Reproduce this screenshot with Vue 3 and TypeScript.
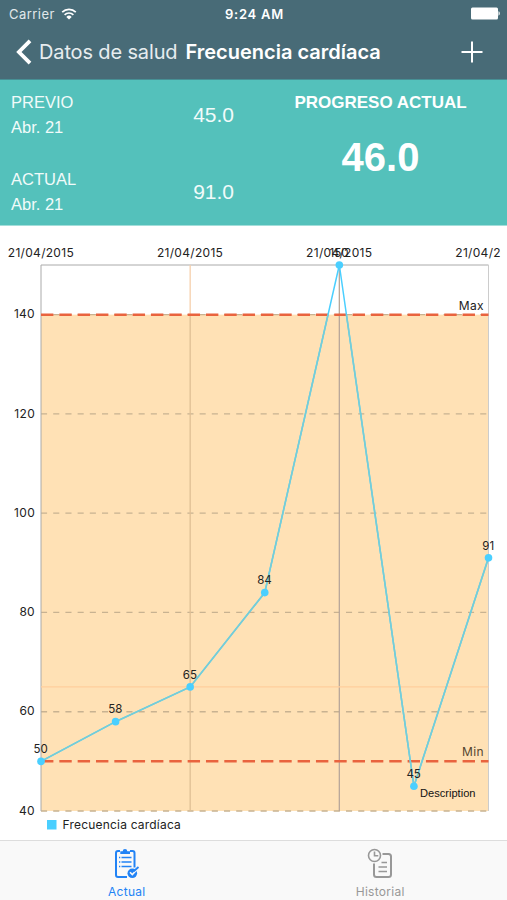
<script setup lang="ts">
interface Reading {
  value: number
  date?: string
}

const readings: Reading[] = [
  { value: 50, date: '21/04/2015' },
  { value: 58 },
  { value: 65, date: '21/04/2015' },
  { value: 84 },
  { value: 150, date: '21/04/2015' },
  { value: 45 },
  { value: 91, date: '21/04/2015' },
]

const left = 41
const right = 488.5
const top = 39
const bottom = 585
const minValue = 40
const maxValue = 150

const x = (i: number): number => left + (i * (right - left)) / (readings.length - 1)
const y = (v: number): number => bottom - ((v - minValue) * (bottom - top)) / (maxValue - minValue)

const ticks: number[] = [40, 60, 80, 100, 120, 140]
const limits = [
  { value: 140, label: 'Max' },
  { value: 50, label: 'Min' },
]
const linePoints: string = readings.map((r, i) => `${x(i)},${y(r.value)}`).join(' ')
const summary = [
  { title: 'PREVIO', date: 'Abr. 21', value: '45.0' },
  { title: 'ACTUAL', date: 'Abr. 21', value: '91.0' },
]
</script>

<template>
  <div class="screen">
    <header class="top">
      <div class="status">
        <div class="carrier">
          <span>Carrier</span>
          <svg class="wifi" viewBox="0 0 16 12" width="16" height="12">
            <path d="M1.2 4.2a9.8 9.8 0 0 1 13.6 0M3.6 6.8a6.3 6.3 0 0 1 8.8 0" />
            <path class="solid" d="M8 11.6 5.3 8.9a3.8 3.8 0 0 1 5.4 0z" />
          </svg>
        </div>
        <span class="time">9:24 AM</span>
        <svg class="battery" viewBox="0 0 30 13" width="30" height="13">
          <rect x="1" y="0.5" width="27" height="12" rx="1.5" />
          <path d="M28.500 4.3c1.700.6 1.700 3.8 0 4.4z" />
        </svg>
      </div>
      <nav class="nav">
        <svg class="back" viewBox="0 0 17 26" width="17" height="26"><path d="M15 1.800 3.900 13 15 24.200" /></svg>
        <span class="parent">Datos de salud</span>
        <h1>Frecuencia cardíaca</h1>
        <svg class="plus" viewBox="0 0 22 22" width="22" height="22"><path d="M11 .5v21M.5 11h21" /></svg>
      </nav>
    </header>

    <section class="panel">
      <div class="history">
        <div v-for="s in summary" :key="s.title" class="entry">
          <div class="label">
            <div>{{ s.title }}</div>
            <div>{{ s.date }}</div>
          </div>
          <div class="value">{{ s.value }}</div>
        </div>
      </div>
      <div class="progress">
        <div class="heading">PROGRESO ACTUAL</div>
        <div class="total">46.0</div>
      </div>
    </section>

    <main class="chart">
      <svg width="507" height="614" viewBox="0 0 507 614">
        <defs>
          <clipPath id="chart-view"><rect x="0" y="0" width="500.5" height="614" /></clipPath>
          <clipPath id="range-view"><rect :x="left" :y="y(140)" :width="right - left" :height="bottom - y(140)" /></clipPath>
        </defs>
        <rect class="range" :x="left" :y="y(140)" :width="right - left" :height="bottom - y(140)" />
        <line v-for="t in ticks" :key="t" class="grid" :x1="left" :x2="right" :y1="y(t)" :y2="y(t)" />
        <path class="frame" :d="`M${left} ${bottom}V${top}H${right}`" />
        <path class="edge" :d="`M${right} ${top}V${bottom}`" />
        <line class="column" :x1="x(2)" :x2="x(2)" :y1="top" :y2="y(140)" />
        <line class="column shaded" :x1="x(2)" :x2="x(2)" :y1="y(140)" :y2="bottom" />
        <line class="column dark" :x1="x(4)" :x2="x(4)" :y1="top" :y2="bottom" />
        <line class="highlight" :x1="left" :x2="right" :y1="y(65)" :y2="y(65)" />
        <g v-for="l in limits" :key="l.label">
          <line class="limit" :x1="left" :x2="right" :y1="y(l.value)" :y2="y(l.value)" />
          <text class="tick" :class="{ muted: l.label === 'Min' }" text-anchor="end" :x="483.8" :y="y(l.value) - 5">{{ l.label }}</text>
        </g>
        <polyline class="series" :points="linePoints" />
        <polyline class="series tinted" :points="linePoints" clip-path="url(#range-view)" />
        <text v-for="t in ticks" :key="`t${t}`" class="tick" text-anchor="end" x="35" :y="y(t) + 3.7">{{ t }}</text>
        <g clip-path="url(#chart-view)">
          <template v-for="(r, i) in readings" :key="i">
            <text v-if="r.date" class="date" text-anchor="middle" :x="x(i) - 0.1" y="31">{{ r.date }}</text>
          </template>
        </g>
        <g v-for="(r, i) in readings" :key="`p${i}`">
          <circle class="dot" :cx="x(i)" :cy="y(r.value)" r="3.8" />
          <text class="point" text-anchor="middle" :x="x(i) - 0.3" :y="y(r.value) - 8.3">{{ r.value }}</text>
        </g>
        <text class="description" x="420" y="571">Description</text>
        <rect class="dot" x="47" y="594" width="9.5" height="9.5" />
        <text class="legend" x="62.5" y="603">Frecuencia cardíaca</text>
      </svg>
    </main>

    <footer class="tabs">
      <div class="tab active">
        <svg width="26" height="32" viewBox="0 0 26 32">
          <path class="stroke" d="M6 3H4Q2 3 2 5v22q0 2 2 2h9M16 3h2.500q2 0 2 2v14.500" />
          <path class="fill" d="M6.3 6V3.2h2.4Q8.8 1 11 1t2.3 2.2h2.700V6z" />
          <path class="rows" d="M5 9.500h1.300M7.500 9.500h10M5 14h1.300M7.500 14h10M5 18.500h1.300M7.500 18.500h10" />
          <circle class="fill" cx="18.3" cy="25.3" r="4.8" />
          <path class="halo" d="m16 24.300 2.300 2.300 5.200-5.600" />
          <path class="check" d="m19.700 23.200 4.800-4.200" />
        </svg>
        <span>Actual</span>
      </div>
      <div class="tab">
        <svg width="26" height="32" viewBox="0 0 26 32">
          <path class="stroke" d="M15.5 6h6q2.500 0 2.500 2.500v18q0 2.500-2.500 2.500H9.500q-2.500 0-2.500-2.500V15.500" />
          <circle class="clock" cx="7.5" cy="7.5" r="6" />
          <path class="clock" d="M7.500 3.500v4.200h3.800" />
          <path class="rows" d="M14.500 14.500h5.500M11.500 19h8.500M11.500 23.500h8.500" />
        </svg>
        <span>Historial</span>
      </div>
    </footer>
  </div>
</template>

<style>
body { background: #fff; }
</style>

<style scoped>
.screen { width: 507px; height: 900px; display: flex; flex-direction: column; overflow: hidden; font-family: Inter, "Liberation Sans", sans-serif; color: #222; }
.top { height: 80px; box-sizing: border-box; background: #486b77; color: #fff; border-bottom: 1px solid #479095; }
.status { height: 27px; display: grid; grid-template-columns: 1fr auto 1fr; align-items: center; padding: 0 7px 0 9px; font-size: 13px; }
.carrier { display: flex; align-items: center; gap: 6px; color: #e1e8ea; letter-spacing: .45px; }
.time { font-weight: 600; letter-spacing: .75px; }
.battery { justify-self: end; fill: #fff; }
.wifi { fill: none; stroke: #fff; stroke-width: 1.7; }
.wifi .solid { fill: #fff; stroke: none; }
.nav { display: flex; align-items: center; height: 50px; padding: 0 24px 0 15px; }
.back { fill: none; stroke: #fff; stroke-width: 3.8; }
.parent { margin-left: 7px; font-size: 20px; letter-spacing: -.14px; color: #e7edef; white-space: nowrap; }
h1 { margin: 0 0 0 8px; font-size: 20px; font-weight: 600; white-space: nowrap; }
.plus { margin-left: auto; fill: none; stroke: #fff; stroke-width: 2; }
.panel { height: 146px; flex: none; display: grid; grid-template-columns: 253px 1fr; background: #54c1bb; color: #f1fbfa; font-family: "Liberation Sans", Arial, sans-serif; border-bottom: 1px solid #a3deda; box-sizing: border-box; }
.history { display: flex; flex-direction: column; gap: 27px; padding: 10px 19px 0 11px; }
.entry { display: flex; justify-content: space-between; align-items: center; height: 50px; }
.label { font-size: 16.5px; line-height: 25px; }
.value { font-size: 21px; }
.progress { display: flex; flex-direction: column; align-items: center; padding: 13px 0 0 1px; font-weight: bold; color: #fff; }
.heading { font-size: 17px; line-height: 20px; }
.total { margin-top: 21px; font-size: 40px; line-height: 46px; }
.chart { height: 614px; flex: none; }
.chart svg { display: block; }
.frame { fill: none; stroke: #aaa; stroke-width: 1; }
.edge { fill: none; stroke: #ccc; stroke-width: 1; }
.column { stroke: #f6d0ac; stroke-width: 1.3; }
.column.shaded { stroke: #dfbf95; }
.column.dark { stroke: #b9a79a; }
.grid { stroke: #c8b291; stroke-width: 1.3; stroke-dasharray: 6.1 6.1; }
.series { fill: none; stroke: #4acfff; stroke-width: 1.5; }
.series.tinted { stroke: #76cdd6; stroke-width: 1.6; }
.range { fill: #ffe1b5; }
.highlight { stroke: #ffce9d; stroke-width: 1.2; }
.limit { stroke: #e9633e; stroke-width: 2.5; stroke-dasharray: 12.4 5.93; }
.dot { fill: #4acfff; }
.tick, .date, .legend { font-size: 12px; letter-spacing: .3px; fill: #222; }
.tick.muted { fill: #54452f; }
.legend { letter-spacing: .2px; }
.point { font-size: 11.5px; fill: #222; }
.description { font-family: "Liberation Sans", Arial, sans-serif; font-size: 11.1px; fill: #111; }
.tabs { height: 60px; box-sizing: border-box; display: grid; grid-template-columns: 1fr 1fr; border-top: 1px solid #ddd; background: #f9f9f9; }
.tab { display: flex; flex-direction: column; align-items: center; padding-top: 7px; font-size: 12px; line-height: 16px; color: #989898; letter-spacing: .3px; }
.tab span { margin-top: 4px; }
.active { color: #2283f5; }
.tab svg { fill: none; stroke: currentColor; stroke-width: 2; }
.tab .fill { fill: currentColor; stroke: none; }
.tab .rows { stroke-width: 1.7; }
.tab .clock { stroke-width: 1.6; }
.tab .halo { stroke: #f9f9f9; stroke-width: 1.6; }
.tab .check { stroke-width: 1.8; }
</style>
